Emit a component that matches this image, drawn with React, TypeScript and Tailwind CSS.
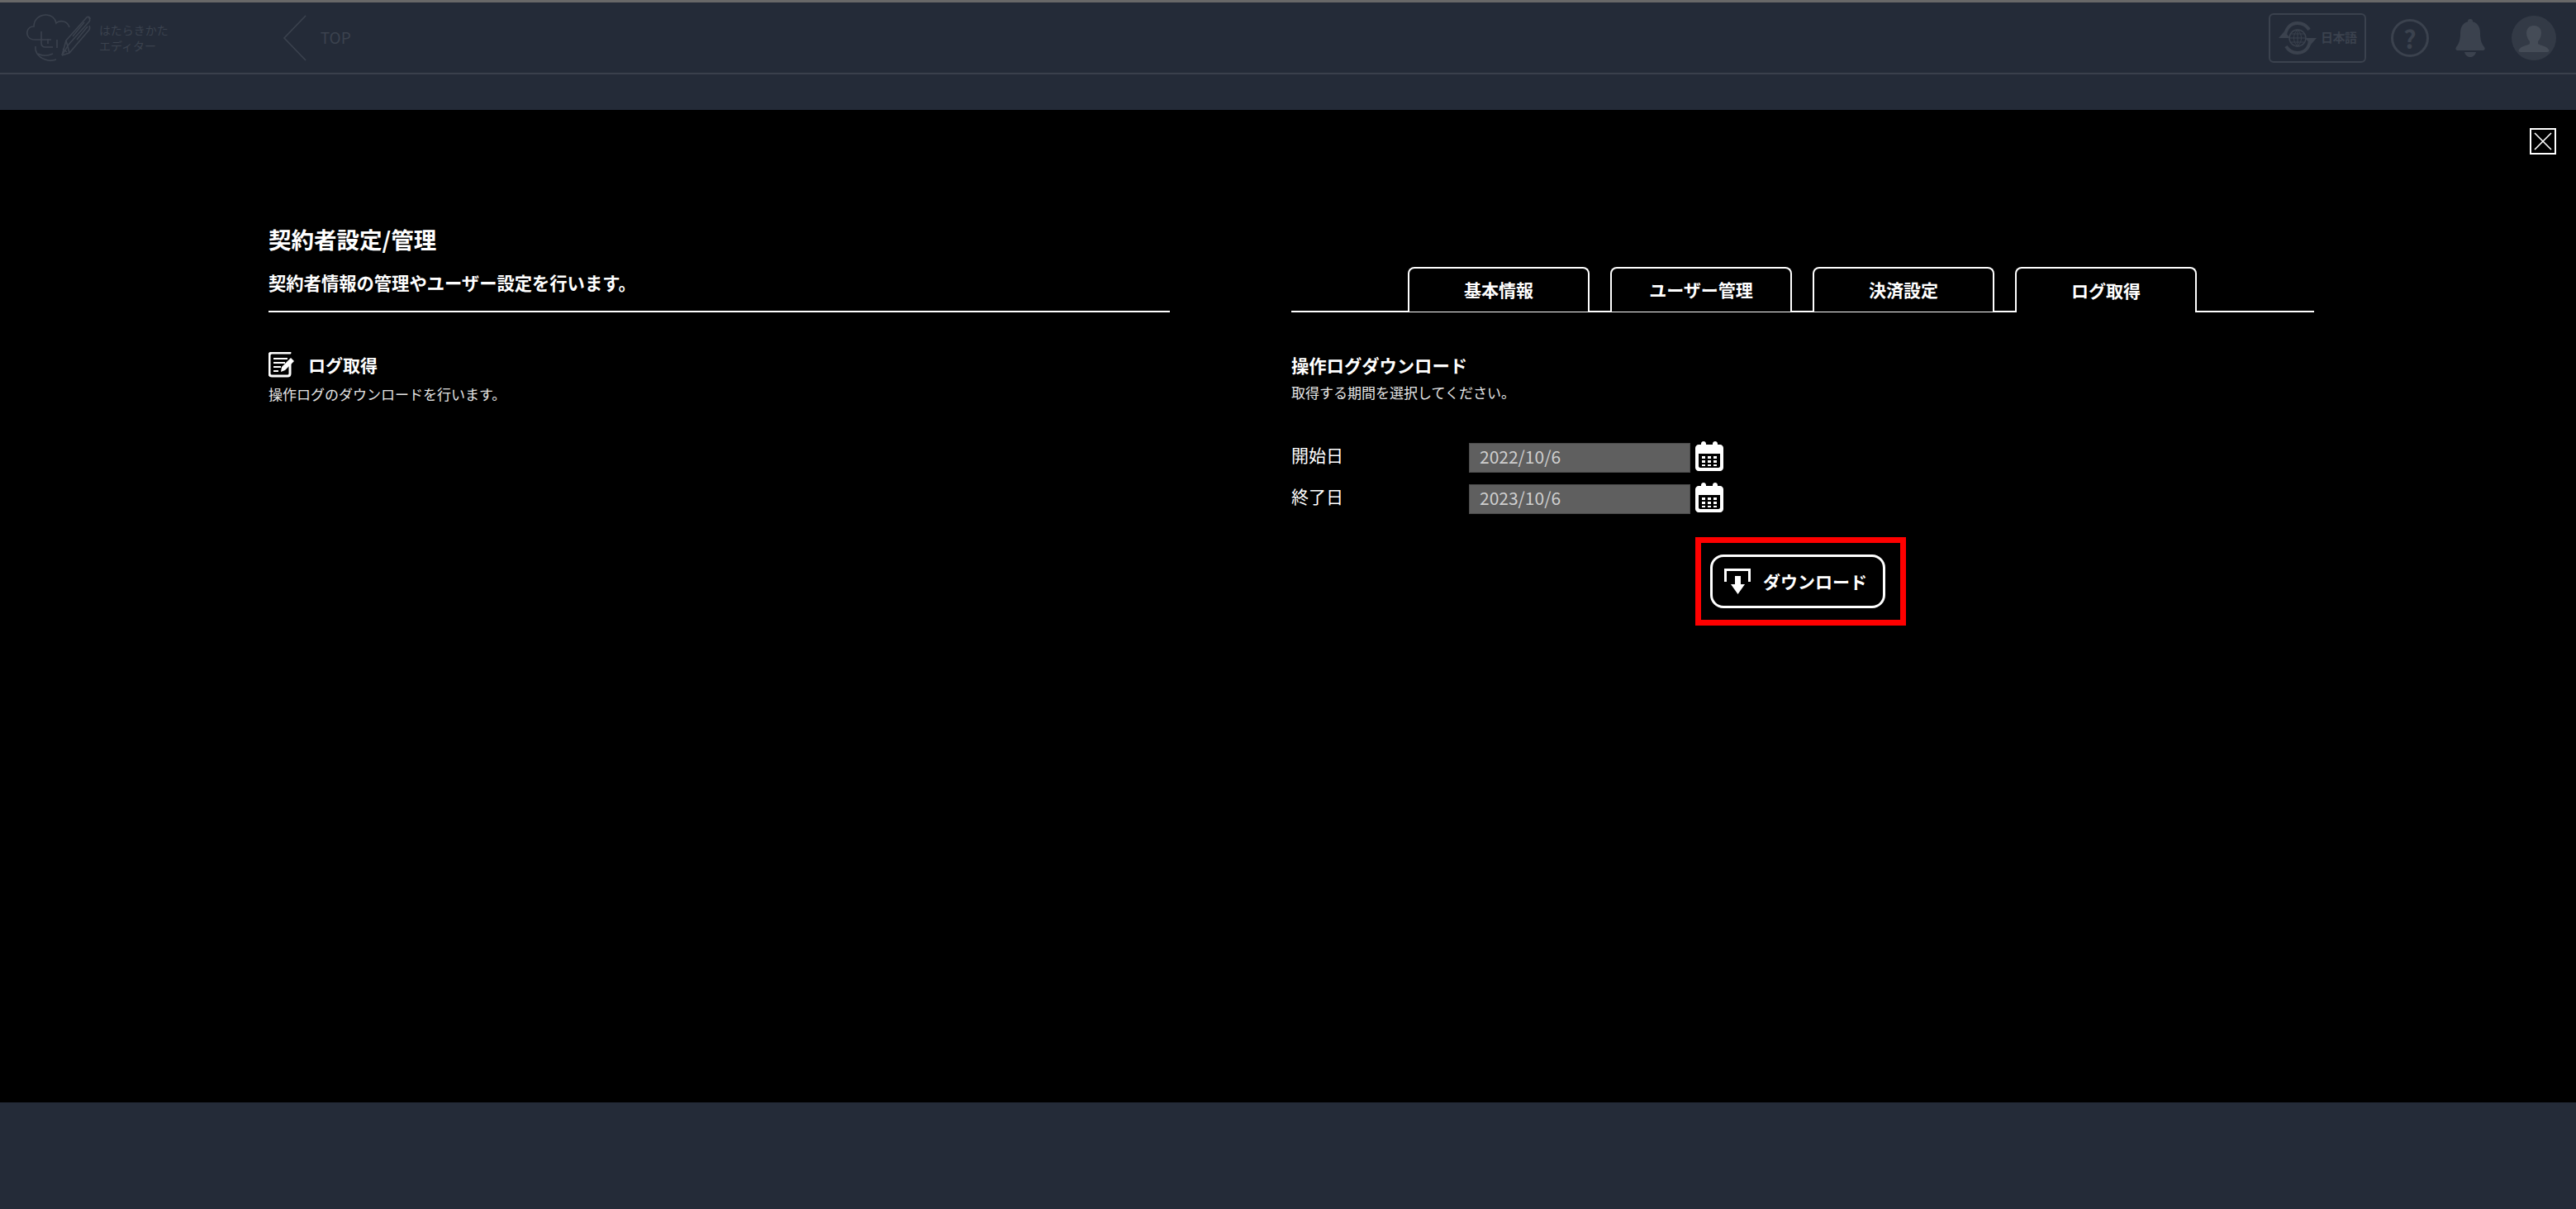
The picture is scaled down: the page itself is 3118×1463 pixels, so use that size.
const FONT = "font-['Noto_Sans_CJK_JP','Noto_Sans',sans-serif]";

const TABS = ["基本情報", "ユーザー管理", "決済設定", "ログ取得"];

function Logo() {
  return (
    <svg width="78" height="58" viewBox="0 0 78 58" fill="none" stroke="#3b424e" strokeWidth="1.6">
      <path d="M30 31H10C3 31 0 26 1 21c1-4 4-6 8-6C9 7 15 1 24 1c6 0 11 4 12 10 2-2 5-3 9-2 4 1 6 4 7 7" />
      <path d="M18 21v14c0 3 2 5 5 5h9M26 30v6M37 31v10" />
      <path d="M11 39c-1 8 5 15 15 17 4 1 7 0 10-1M14 48c5 3 11 3 18 0" />
      <path d="M43 50l5-18 25-28c1-1 3-1 4 1l-1 0c1 2 1 3 0 4L51 37z" />
      <path d="M43 50l9-3 24-28c1-2 1-3 0-5M48 32l4 15M56 27l14-17M61 31l13-16M44 42l5 4" />
    </svg>
  );
}

function LangIcon() {
  return (
    <svg width="46" height="40" viewBox="0 0 46 40" fill="none" stroke="#3b424e">
      <path d="M8 19C8 9 14 2 23 2c6 0 11 3 14 8" strokeWidth="4" />
      <path d="M38 21c0 10-6 17-15 17-6 0-11-3-14-8" strokeWidth="4" />
      <path d="M0 20l7-8 7 8zM32 20l7 8 7-8z" fill="#3b424e" stroke="none" />
      <circle cx="23" cy="20" r="10" strokeWidth="1.5" />
      <path d="M13 20h20M23 10v20M15 15h16M15 25h16M23 10c-6 5-6 15 0 20M23 10c6 5 6 15 0 20" strokeWidth="1" />
    </svg>
  );
}

function Bell() {
  return (
    <svg width="36" height="48" viewBox="0 0 36 48" fill="#3b424e">
      <circle cx="18" cy="4" r="3" />
      <path d="M18 4c-8 0-12 6-12 14 0 9-2 13-5 17-1 2-1 3 1 4h32c2-1 2-2 1-4-3-4-5-8-5-17 0-8-4-14-12-14z" />
      <path d="M11 41h14c-1 4-4 6-7 6s-6-2-7-6z" />
    </svg>
  );
}

function Avatar() {
  return (
    <div className="flex h-[54px] w-[54px] items-center justify-center rounded-full bg-[#333a46]">
      <svg width="38" height="36" viewBox="0 0 38 36" fill="#454c57">
        <path d="M19 3c-6 0-9 4-9 9 0 4 2 8 4 10v3c-3 2-11 3-13 7-1 2 0 3 2 3h32c2 0 3-1 2-3-2-4-10-5-13-7v-3c2-2 4-6 4-10 0-5-3-9-9-9z" />
      </svg>
    </div>
  );
}

function Header() {
  return (
    <header className="flex h-[87px] items-center border-b-2 border-[#3a404c]">
      <div className="ml-8 flex items-center gap-[10px]">
        <Logo />
        <div className="flex flex-col text-[14px] leading-[19px] text-[#3b424e]">
          <span>はたらきかた</span>
          <span>エディター</span>
        </div>
      </div>
      <svg className="ml-[138px]" width="30" height="56" viewBox="0 0 30 56" fill="none" stroke="#3b424e" strokeWidth="1.6">
        <path d="M28 1L2 28l26 27" />
      </svg>
      <span className="ml-[16px] text-[19px] text-[#3b424e]">TOP</span>
      <div className="ml-auto mr-6 flex items-center">
        <div className="flex h-[60px] w-[118px] items-center gap-[5px] rounded-[6px] border-2 border-[#3b424e] pl-[10px]">
          <LangIcon />
          <span className="whitespace-nowrap text-[15px] font-bold tracking-[-0.5px] text-[#3b424e]">日本語</span>
        </div>
        <div className="ml-[30px] flex h-[46px] w-[46px] items-center justify-center rounded-full border-[3px] border-[#3b424e] text-[30px] font-bold leading-none text-[#3b424e]">
          ?
        </div>
        <div className="ml-8">
          <Bell />
        </div>
        <div className="ml-8">
          <Avatar />
        </div>
      </div>
    </header>
  );
}

function NoteIcon() {
  return (
    <svg width="31" height="31" viewBox="0 0 31 31" fill="none" stroke="#fff">
      <path d="M26 13v13c0 2-1 3-3 3H4c-2 0-3-1-3-3V4c0-2 1-3 3-3h22" strokeWidth="3" strokeLinecap="round" />
      <path d="M6 8h17M6 13h14M6 18h9M6 23h6" strokeWidth="2.2" />
      <path d="M15 24l1-6 11-11 4 4-11 11z" fill="#fff" stroke="none" />
    </svg>
  );
}

function CalendarIcon() {
  return (
    <svg width="34" height="36" viewBox="0 0 34 36" fill="#fff">
      <path fillRule="evenodd" d="M4 4h3V3c0-4 6-4 6 0v1h8V3c0-4 6-4 6 0v1h3c2 0 4 2 4 4v24c0 2-2 4-4 4H4c-2 0-4-2-4-4V8c0-2 2-4 4-4zM4 15v15c0 1 1 2 2 2h22c1 0 2-1 2-2V15z" />
      <path d="M8 18h4v3H8zM15 18h4v3h-4zM22 18h4v3h-4zM8 23h4v3H8zM15 23h4v3h-4zM22 23h4v3h-4zM8 28h4v2H8zM15 28h4v2h-4zM22 28h4v2h-4z" />
    </svg>
  );
}

function DownloadIcon() {
  return (
    <svg width="32" height="31" viewBox="0 0 32 31" fill="none">
      <path d="M1.5 16V1.5h29V16" stroke="#fff" strokeWidth="3" />
      <path d="M13 9h7v10h5L16.5 31 8 19h5z" fill="#fff" />
    </svg>
  );
}

function DateRow({ label, value }: { label: string; value: string }) {
  return (
    <div className="flex h-[38px] items-center">
      <span className="mb-[8px] w-[215px] text-[21px] leading-none text-white">{label}</span>
      <div className="flex h-[36px] w-[268px] items-center border border-[#4c4c4c] bg-[#5f5f5f] pb-[2px] pl-3 text-[21px] text-[#cfcfcf]">
        {value}
      </div>
      <div className="mb-[4px] ml-[6px]">
        <CalendarIcon />
      </div>
    </div>
  );
}

export default function App() {
  return (
    <div className={`flex h-[1463px] flex-col overflow-hidden bg-[#242b38] ${FONT}`}>
      <div className="h-[3px] bg-[#686868]" />
      <Header />
      <div className="h-[43px]" />
      <main className="relative flex h-[1201px] gap-[147px] bg-black pl-[325px]">
        <button
          type="button"
          className="absolute right-6 top-[22px] flex h-8 w-8 items-center justify-center border-2 border-white"
        >
          <svg width="24" height="24" viewBox="0 0 24 24" stroke="#fff" strokeWidth="1.6">
            <path d="M2 2l20 20M22 2L2 22" />
          </svg>
        </button>

        <section className="w-[1091px]">
          <h1 className="mt-[136px] text-[27.5px] font-bold leading-[40px] text-white">契約者設定/管理</h1>
          <p className="mt-[18px] text-[21.3px] font-bold leading-[30px] text-white">
            契約者情報の管理やユーザー設定を行います。
          </p>
          <div className="mt-[19px] h-[2px] bg-white" />
          <div className="mt-[48px] flex items-center gap-[17px]">
            <NoteIcon />
            <span className="text-[21px] font-bold leading-[31px] text-white">ログ取得</span>
          </div>
          <p className="mt-[8px] text-[17px] leading-[24px] text-[#e6e6e6]">操作ログのダウンロードを行います。</p>
        </section>

        <section className="w-[1238px]">
          <div className="mt-[190px] flex h-[55px] gap-[25px] border-b-2 border-white pl-[141px]">
            {TABS.map((tab, i) => (
              <div
                key={tab}
                className={`flex h-[54px] w-[220px] items-center justify-center rounded-t-[8px] border-2 border-b-0 border-white bg-black text-[21px] font-bold text-white ${
                  i === 3 ? "relative z-10 h-[55px]" : ""
                }`}
              >
                {tab}
              </div>
            ))}
          </div>
          <h2 className="mt-[48px] text-[21.3px] font-bold leading-[32px] text-white">操作ログダウンロード</h2>
          <p className="mt-[5px] text-[17px] leading-[24px] text-[#e6e6e6]">取得する期間を選択してください。</p>
          <div className="mt-[48px] flex flex-col gap-[12px]">
            <DateRow label="開始日" value="2022/10/6" />
            <DateRow label="終了日" value="2023/10/6" />
          </div>
          <div className="ml-[489px] mt-[27px] flex h-[107px] w-[255px] items-center border-[7px] border-[#ff0000] pl-[11px]">
            <button
              type="button"
              className="flex h-[65px] w-[212px] items-center gap-[15px] rounded-[16px] border-[3px] border-white pl-[14px] text-[21px] font-bold text-white"
            >
              <DownloadIcon />
              ダウンロード
            </button>
          </div>
        </section>
      </main>
    </div>
  );
}
